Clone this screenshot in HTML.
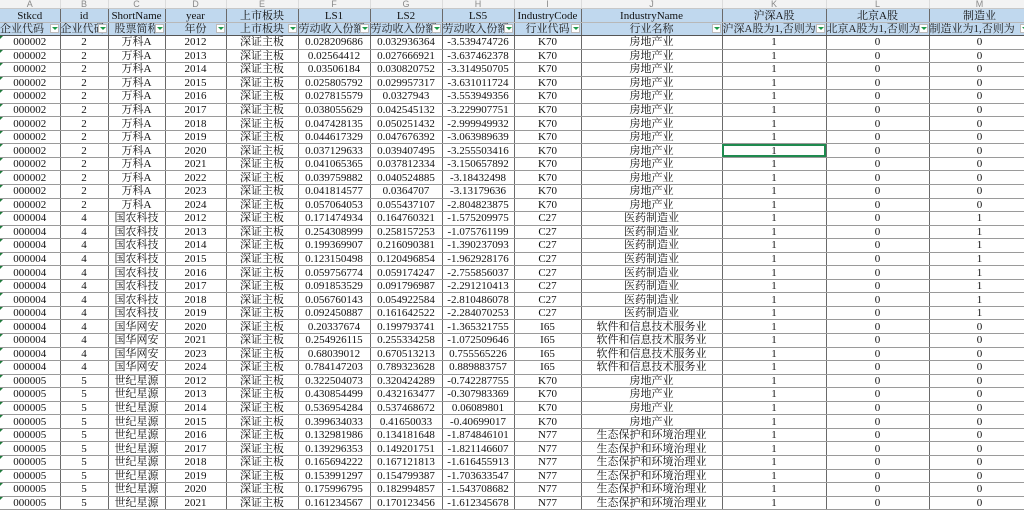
<!DOCTYPE html>
<html><head><meta charset="utf-8">
<style>
body{margin:0;width:1024px;height:505px;overflow:hidden;background:#fff;font-family:"Liberation Serif","Noto Serif CJK SC","Noto Sans CJK SC",serif;}
table{border-collapse:collapse;table-layout:fixed;position:absolute;left:0;top:0;width:1030px;}
td{padding:0;text-align:center;font-size:11px;color:#111;white-space:nowrap;overflow:hidden;border-right:1px solid #6a6a6a;border-bottom:1px solid #9a9a9a;height:12.56px;line-height:12px;position:relative;}
tr.L td{height:8px;background:#f3f3f3;color:#8a8a8a;font-family:"Liberation Sans",sans-serif;font-size:9px;line-height:8px;border-right:1px solid #dcdcdc;border-bottom:1px solid #c8c8c8;}
tr.h1 td{background:#c0d8ee;height:13px;border-bottom:1px solid #b8b8b8;}
tr.h2 td{background:#c0d8ee;height:12px;text-align:center;color:#222;border-bottom:1px solid #555;}
.f{position:absolute;right:1px;top:1px;width:9px;height:9px;background:#fff;border:1px solid #bbb;box-sizing:border-box;}
.f:after{content:"";position:absolute;left:1px;top:2px;border-left:3px solid transparent;border-right:3px solid transparent;border-top:3px solid #1d9a4a;}
.g{position:absolute;left:0;top:0;border-top:3px solid #1d7a3a;border-right:3px solid transparent;}
.s{outline:2px solid #1f8a4f;outline-offset:-2px;}
td.kh{color:#1f7a45;border-bottom:2px solid #1f8a4f;}
</style></head><body>
<table>
<colgroup><col style="width:60px"><col style="width:48px"><col style="width:57px"><col style="width:61px"><col style="width:72px"><col style="width:72px"><col style="width:72px"><col style="width:72px"><col style="width:67px"><col style="width:141px"><col style="width:104px"><col style="width:103px"><col style="width:101px"></colgroup>
<tr class="L"><td>A</td><td>B</td><td>C</td><td>D</td><td>E</td><td>F</td><td>G</td><td>H</td><td>I</td><td>J</td><td class="kh">K</td><td>L</td><td>M</td></tr>
<tr class="h1"><td>Stkcd</td><td>id</td><td>ShortName</td><td>year</td><td>上市板块</td><td>LS1</td><td>LS2</td><td>LS5</td><td>IndustryCode</td><td>IndustryName</td><td>沪深A股</td><td>北京A股</td><td>制造业</td></tr>
<tr class="h2"><td style="text-align:left">企业代码<i class="f"></i></td><td style="text-align:left">企业代码<i class="f"></i></td><td>股票简称<i class="f"></i></td><td>年份<i class="f"></i></td><td>上市板块<i class="f"></i></td><td style="text-align:left">劳动收入份额<i class="f"></i></td><td style="text-align:left">劳动收入份额<i class="f"></i></td><td style="text-align:left">劳动收入份额<i class="f"></i></td><td>行业代码<i class="f"></i></td><td>行业名称<i class="f"></i></td><td style="text-align:left">沪深A股为1,否则为<i class="f"></i></td><td style="text-align:left">北京A股为1,否则为<i class="f"></i></td><td style="text-align:left">制造业为1,否则为<i class="f"></i></td></tr>
<tr><td><i class="g"></i>000002</td><td>2</td><td>万科A</td><td>2012</td><td>深证主板</td><td>0.028209686</td><td>0.032936364</td><td>-3.539474726</td><td>K70</td><td>房地产业</td><td>1</td><td>0</td><td>0</td></tr>
<tr><td><i class="g"></i>000002</td><td>2</td><td>万科A</td><td>2013</td><td>深证主板</td><td>0.02564412</td><td>0.027666921</td><td>-3.637462378</td><td>K70</td><td>房地产业</td><td>1</td><td>0</td><td>0</td></tr>
<tr><td><i class="g"></i>000002</td><td>2</td><td>万科A</td><td>2014</td><td>深证主板</td><td>0.03506184</td><td>0.030820752</td><td>-3.314950705</td><td>K70</td><td>房地产业</td><td>1</td><td>0</td><td>0</td></tr>
<tr><td><i class="g"></i>000002</td><td>2</td><td>万科A</td><td>2015</td><td>深证主板</td><td>0.025805792</td><td>0.029957317</td><td>-3.631011724</td><td>K70</td><td>房地产业</td><td>1</td><td>0</td><td>0</td></tr>
<tr><td><i class="g"></i>000002</td><td>2</td><td>万科A</td><td>2016</td><td>深证主板</td><td>0.027815579</td><td>0.0327943</td><td>-3.553949356</td><td>K70</td><td>房地产业</td><td>1</td><td>0</td><td>0</td></tr>
<tr><td><i class="g"></i>000002</td><td>2</td><td>万科A</td><td>2017</td><td>深证主板</td><td>0.038055629</td><td>0.042545132</td><td>-3.229907751</td><td>K70</td><td>房地产业</td><td>1</td><td>0</td><td>0</td></tr>
<tr><td><i class="g"></i>000002</td><td>2</td><td>万科A</td><td>2018</td><td>深证主板</td><td>0.047428135</td><td>0.050251432</td><td>-2.999949932</td><td>K70</td><td>房地产业</td><td>1</td><td>0</td><td>0</td></tr>
<tr><td><i class="g"></i>000002</td><td>2</td><td>万科A</td><td>2019</td><td>深证主板</td><td>0.044617329</td><td>0.047676392</td><td>-3.063989639</td><td>K70</td><td>房地产业</td><td>1</td><td>0</td><td>0</td></tr>
<tr><td><i class="g"></i>000002</td><td>2</td><td>万科A</td><td>2020</td><td>深证主板</td><td>0.037129633</td><td>0.039407495</td><td>-3.255503416</td><td>K70</td><td>房地产业</td><td class="s">1</td><td>0</td><td>0</td></tr>
<tr><td><i class="g"></i>000002</td><td>2</td><td>万科A</td><td>2021</td><td>深证主板</td><td>0.041065365</td><td>0.037812334</td><td>-3.150657892</td><td>K70</td><td>房地产业</td><td>1</td><td>0</td><td>0</td></tr>
<tr><td><i class="g"></i>000002</td><td>2</td><td>万科A</td><td>2022</td><td>深证主板</td><td>0.039759882</td><td>0.040524885</td><td>-3.18432498</td><td>K70</td><td>房地产业</td><td>1</td><td>0</td><td>0</td></tr>
<tr><td><i class="g"></i>000002</td><td>2</td><td>万科A</td><td>2023</td><td>深证主板</td><td>0.041814577</td><td>0.0364707</td><td>-3.13179636</td><td>K70</td><td>房地产业</td><td>1</td><td>0</td><td>0</td></tr>
<tr><td><i class="g"></i>000002</td><td>2</td><td>万科A</td><td>2024</td><td>深证主板</td><td>0.057064053</td><td>0.055437107</td><td>-2.804823875</td><td>K70</td><td>房地产业</td><td>1</td><td>0</td><td>0</td></tr>
<tr><td><i class="g"></i>000004</td><td>4</td><td>国农科技</td><td>2012</td><td>深证主板</td><td>0.171474934</td><td>0.164760321</td><td>-1.575209975</td><td>C27</td><td>医药制造业</td><td>1</td><td>0</td><td>1</td></tr>
<tr><td><i class="g"></i>000004</td><td>4</td><td>国农科技</td><td>2013</td><td>深证主板</td><td>0.254308999</td><td>0.258157253</td><td>-1.075761199</td><td>C27</td><td>医药制造业</td><td>1</td><td>0</td><td>1</td></tr>
<tr><td><i class="g"></i>000004</td><td>4</td><td>国农科技</td><td>2014</td><td>深证主板</td><td>0.199369907</td><td>0.216090381</td><td>-1.390237093</td><td>C27</td><td>医药制造业</td><td>1</td><td>0</td><td>1</td></tr>
<tr><td><i class="g"></i>000004</td><td>4</td><td>国农科技</td><td>2015</td><td>深证主板</td><td>0.123150498</td><td>0.120496854</td><td>-1.962928176</td><td>C27</td><td>医药制造业</td><td>1</td><td>0</td><td>1</td></tr>
<tr><td><i class="g"></i>000004</td><td>4</td><td>国农科技</td><td>2016</td><td>深证主板</td><td>0.059756774</td><td>0.059174247</td><td>-2.755856037</td><td>C27</td><td>医药制造业</td><td>1</td><td>0</td><td>1</td></tr>
<tr><td><i class="g"></i>000004</td><td>4</td><td>国农科技</td><td>2017</td><td>深证主板</td><td>0.091853529</td><td>0.091796987</td><td>-2.291210413</td><td>C27</td><td>医药制造业</td><td>1</td><td>0</td><td>1</td></tr>
<tr><td><i class="g"></i>000004</td><td>4</td><td>国农科技</td><td>2018</td><td>深证主板</td><td>0.056760143</td><td>0.054922584</td><td>-2.810486078</td><td>C27</td><td>医药制造业</td><td>1</td><td>0</td><td>1</td></tr>
<tr><td><i class="g"></i>000004</td><td>4</td><td>国农科技</td><td>2019</td><td>深证主板</td><td>0.092450887</td><td>0.161642522</td><td>-2.284070253</td><td>C27</td><td>医药制造业</td><td>1</td><td>0</td><td>1</td></tr>
<tr><td><i class="g"></i>000004</td><td>4</td><td>国华网安</td><td>2020</td><td>深证主板</td><td>0.20337674</td><td>0.199793741</td><td>-1.365321755</td><td>I65</td><td>软件和信息技术服务业</td><td>1</td><td>0</td><td>0</td></tr>
<tr><td><i class="g"></i>000004</td><td>4</td><td>国华网安</td><td>2021</td><td>深证主板</td><td>0.254926115</td><td>0.255334258</td><td>-1.072509646</td><td>I65</td><td>软件和信息技术服务业</td><td>1</td><td>0</td><td>0</td></tr>
<tr><td><i class="g"></i>000004</td><td>4</td><td>国华网安</td><td>2023</td><td>深证主板</td><td>0.68039012</td><td>0.670513213</td><td>0.755565226</td><td>I65</td><td>软件和信息技术服务业</td><td>1</td><td>0</td><td>0</td></tr>
<tr><td><i class="g"></i>000004</td><td>4</td><td>国华网安</td><td>2024</td><td>深证主板</td><td>0.784147203</td><td>0.789323628</td><td>0.889883757</td><td>I65</td><td>软件和信息技术服务业</td><td>1</td><td>0</td><td>0</td></tr>
<tr><td><i class="g"></i>000005</td><td>5</td><td>世纪星源</td><td>2012</td><td>深证主板</td><td>0.322504073</td><td>0.320424289</td><td>-0.742287755</td><td>K70</td><td>房地产业</td><td>1</td><td>0</td><td>0</td></tr>
<tr><td><i class="g"></i>000005</td><td>5</td><td>世纪星源</td><td>2013</td><td>深证主板</td><td>0.430854499</td><td>0.432163477</td><td>-0.307983369</td><td>K70</td><td>房地产业</td><td>1</td><td>0</td><td>0</td></tr>
<tr><td><i class="g"></i>000005</td><td>5</td><td>世纪星源</td><td>2014</td><td>深证主板</td><td>0.536954284</td><td>0.537468672</td><td>0.06089801</td><td>K70</td><td>房地产业</td><td>1</td><td>0</td><td>0</td></tr>
<tr><td><i class="g"></i>000005</td><td>5</td><td>世纪星源</td><td>2015</td><td>深证主板</td><td>0.399634033</td><td>0.41650033</td><td>-0.40699017</td><td>K70</td><td>房地产业</td><td>1</td><td>0</td><td>0</td></tr>
<tr><td><i class="g"></i>000005</td><td>5</td><td>世纪星源</td><td>2016</td><td>深证主板</td><td>0.132981986</td><td>0.134181648</td><td>-1.874846101</td><td>N77</td><td>生态保护和环境治理业</td><td>1</td><td>0</td><td>0</td></tr>
<tr><td><i class="g"></i>000005</td><td>5</td><td>世纪星源</td><td>2017</td><td>深证主板</td><td>0.139296353</td><td>0.149201751</td><td>-1.821146607</td><td>N77</td><td>生态保护和环境治理业</td><td>1</td><td>0</td><td>0</td></tr>
<tr><td><i class="g"></i>000005</td><td>5</td><td>世纪星源</td><td>2018</td><td>深证主板</td><td>0.165694222</td><td>0.167121813</td><td>-1.616455913</td><td>N77</td><td>生态保护和环境治理业</td><td>1</td><td>0</td><td>0</td></tr>
<tr><td><i class="g"></i>000005</td><td>5</td><td>世纪星源</td><td>2019</td><td>深证主板</td><td>0.153991297</td><td>0.154799387</td><td>-1.703633547</td><td>N77</td><td>生态保护和环境治理业</td><td>1</td><td>0</td><td>0</td></tr>
<tr><td><i class="g"></i>000005</td><td>5</td><td>世纪星源</td><td>2020</td><td>深证主板</td><td>0.175996795</td><td>0.182994857</td><td>-1.543708682</td><td>N77</td><td>生态保护和环境治理业</td><td>1</td><td>0</td><td>0</td></tr>
<tr><td><i class="g"></i>000005</td><td>5</td><td>世纪星源</td><td>2021</td><td>深证主板</td><td>0.161234567</td><td>0.170123456</td><td>-1.612345678</td><td>N77</td><td>生态保护和环境治理业</td><td>1</td><td>0</td><td>0</td></tr>
</table>
</body></html>
